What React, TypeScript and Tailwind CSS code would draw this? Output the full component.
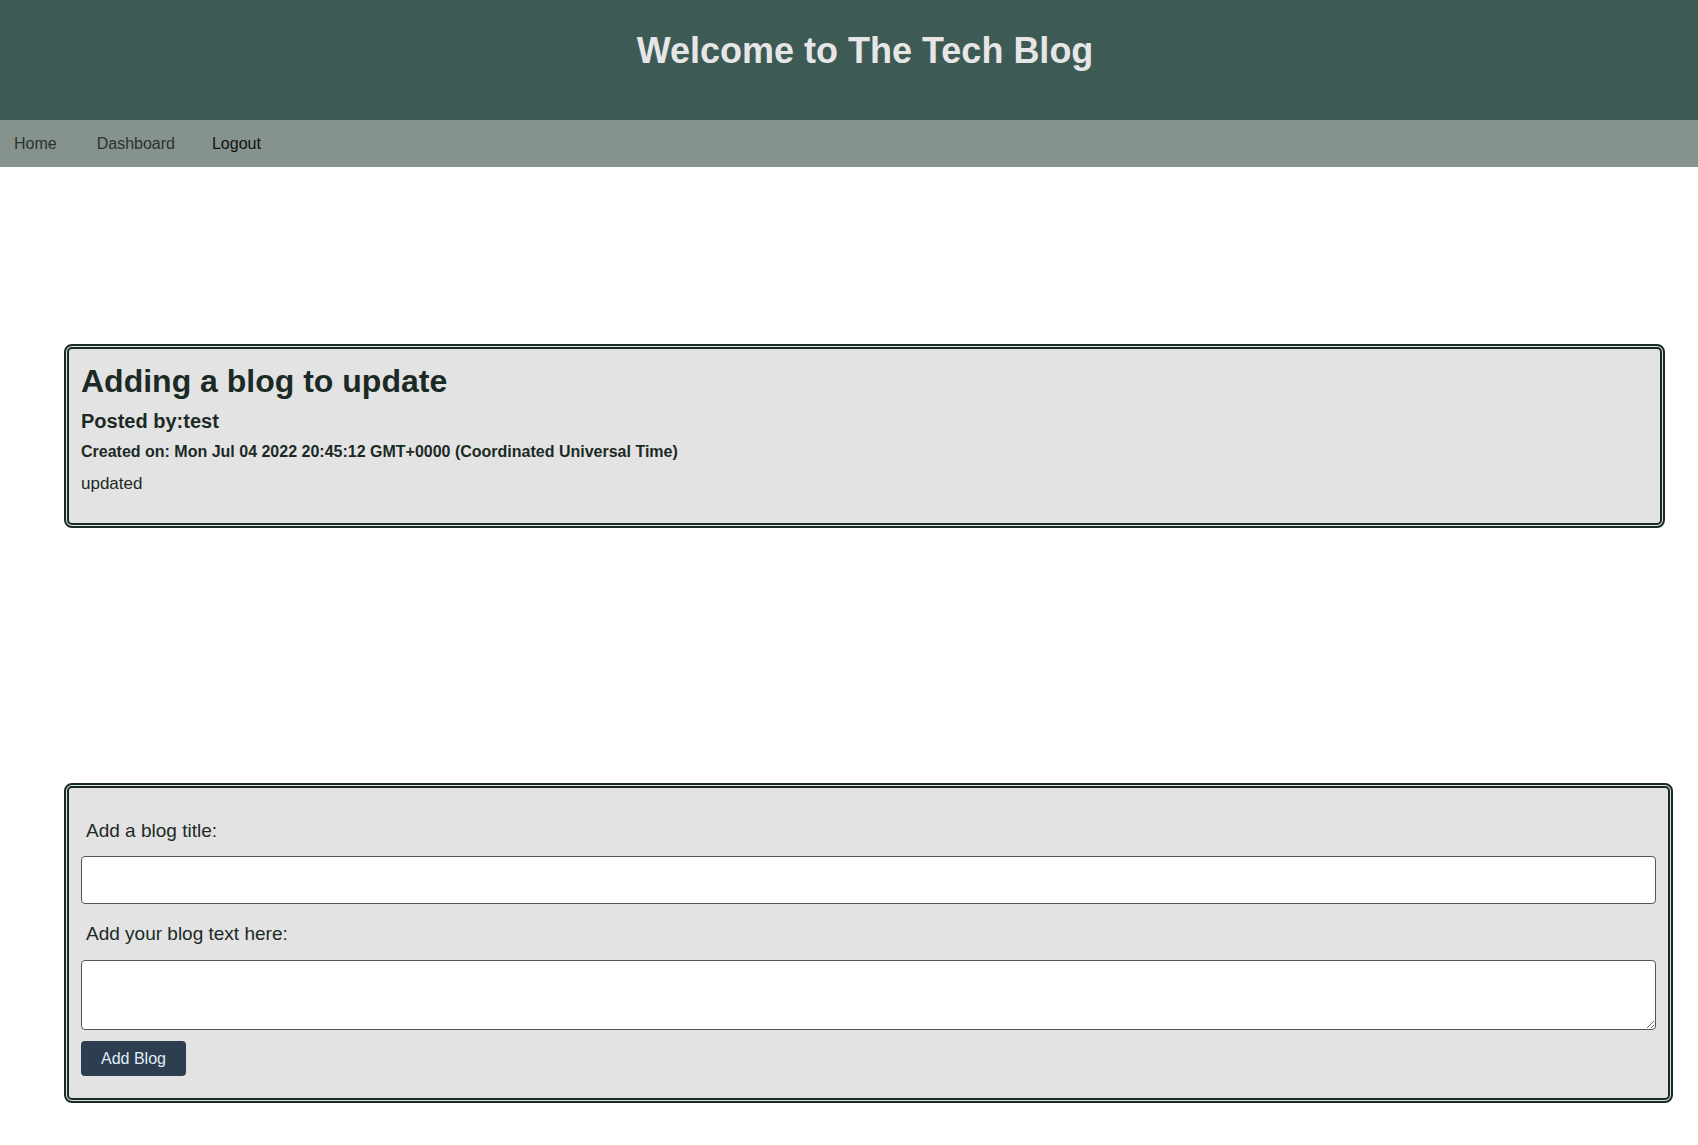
import React from "react";

const links = [
  { label: "Home", cls: "text-[#2a3330]" },
  { label: "Dashboard", cls: "text-[#2a3330]" },
  { label: "Logout", cls: "text-[#111]" },
];

export default function App() {
  return (
    <div className="min-h-screen bg-white font-['Liberation_Sans',Arial,sans-serif] text-[#1c2a26]">
      {/* Header */}
      <header className="h-[120px] bg-[#3d5a55] flex items-center justify-center pl-[32px]">
        <h1 className="text-[36px] font-bold text-[#e6e6e6] leading-none -mt-[18px]">
          Welcome to The Tech Blog
        </h1>
      </header>

      {/* Nav */}
      <nav className="h-[47px] bg-[#86928e] flex items-center pl-[14px] text-[16px]">
        <a className={`${links[0].cls} mr-[40px]`}>{links[0].label}</a>
        <a className={`${links[1].cls} mr-[37px]`}>{links[1].label}</a>
        <button className={`${links[2].cls} text-[16px]`}>{links[2].label}</button>
      </nav>

      {/* Post */}
      <main className="pl-[64px] pt-[177px] pb-10">
        <section className="w-[1601px] border-[5px] border-double border-[#1a2a24] rounded-lg bg-[#e3e3e3] px-3 pt-[14px] pb-[29px]">
          <h2 className="text-[32px] font-bold leading-[37px]">Adding a blog to update</h2>
          <h3 className="text-[20px] font-bold leading-[23px] mt-[10px]">Posted by:test</h3>
          <h4 className="text-[16px] font-bold leading-[18px] mt-[10px]">
            Created on: Mon Jul 04 2022 20:45:12 GMT+0000 (Coordinated Universal Time)
          </h4>
          <p className="text-[17px] leading-[20px] mt-[13px]">updated</p>
        </section>

        {/* New post form */}
        <form
          className="w-[1609px] mt-[255px] border-[5px] border-double border-[#1a2a24] rounded-lg bg-[#e3e3e3] px-3 pt-[32px] pb-[22px] flex flex-col"
          onSubmit={(e) => e.preventDefault()}
        >
          <label className="text-[19px] leading-[22px] pl-[5px]">Add a blog title:</label>
          <input
            type="text"
            className="mt-[14px] h-[48px] w-[1575px] bg-white border border-[#555] rounded"
          />
          <label className="text-[19px] leading-[22px] pl-[5px] mt-[19px]">Add your blog text here:</label>
          <textarea className="mt-[15px] h-[70px] w-[1575px] bg-white border border-[#555] rounded" />
          <button
            type="submit"
            className="mt-[11px] w-[105px] h-[35px] rounded bg-[#2c3e50] text-[#e0eef8] text-[16px]"
          >
            Add Blog
          </button>
        </form>
      </main>
    </div>
  );
}
